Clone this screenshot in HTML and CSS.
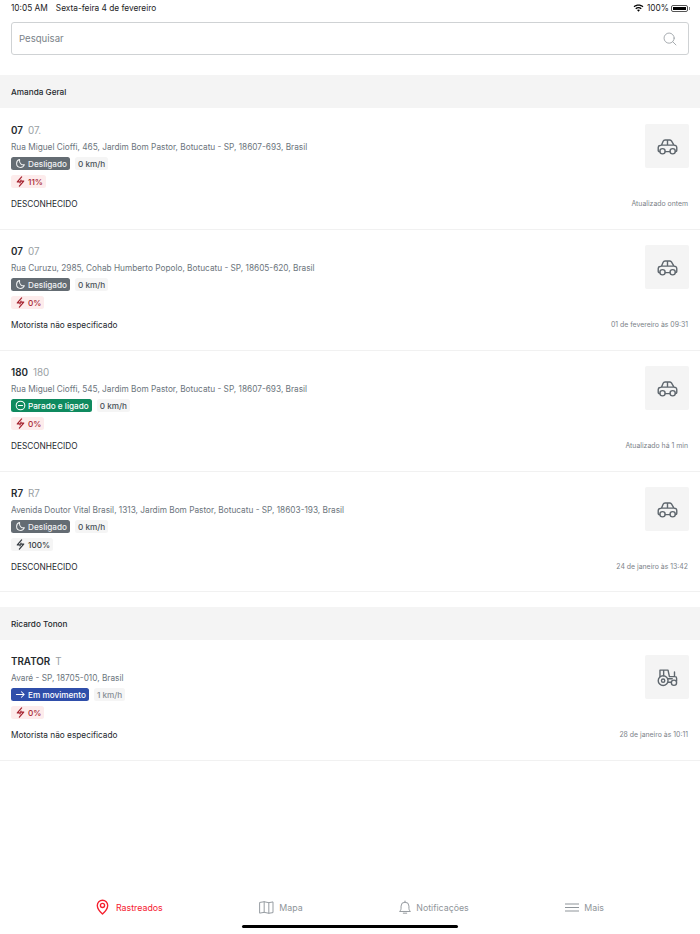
FILE: index.html
```html
<!DOCTYPE html>
<html lang="pt-BR">
<head>
  <meta charset="UTF-8">
  <title>Rastreados</title>
  <link rel="stylesheet" href="styles.css">
</head>
<body>
  <svg class="sprites" width="0" height="0">
    <symbol id="i-car" viewBox="0 0 24 24">
      <path d="M3.2 17.8H2.6C1.9 17.8 1.4 17.3 1.4 16.6V13C1.4 11.8 2.2 11 3.3 10.8L5.2 10.4L7 6C7.4 5 8.2 4.5 9.2 4.5H14.4C15.3 4.5 16 4.9 16.5 5.6L19.4 10.4L21 10.8C22 11.1 22.6 11.9 22.6 13V16.6C22.6 17.3 22.1 17.8 21.4 17.8H21M9.4 17.8H14.8M5.2 10.4H19.4M12 4.5V10.4" />
      <circle cx="6.3" cy="17.4" r="3" />
      <circle cx="17.9" cy="17.4" r="3" />
    </symbol>
    <symbol id="i-tractor" viewBox="0 0 24 24">
      <circle cx="7" cy="15.6" r="5.6" />
      <circle cx="7" cy="15.6" r="1.9" />
      <circle cx="19.4" cy="18" r="3" />
      <path d="M3.4 10.8V3.6H12.6L14.2 11H20.6C21.6 11 22.4 11.8 22.4 12.8V16M12.6 17.4H16.4M12.4 13.4H17.4M20 11V5.6M7.6 3.6V10" />
    </symbol>
    <symbol id="i-moon" viewBox="0 0 24 24">
      <path d="M10 3.5C6 4.5 3.5 8 3.5 12C3.5 17 7.5 20.5 12.2 20.5C16 20.5 19.3 18.2 20.5 14.5C15 16 8.5 11.5 10 3.5Z" />
    </symbol>
    <symbol id="i-minus" viewBox="0 0 24 24">
      <circle cx="12" cy="12" r="9.5" />
      <path d="M7.5 12H16.5" />
    </symbol>
    <symbol id="i-arrow" viewBox="0 0 24 24">
      <path d="M3 12H20M14 6L20 12L14 18" />
    </symbol>
    <symbol id="i-bolt" viewBox="0 0 24 24">
      <path d="M14.5 2L5 13H11.5L11 15M9.5 22L19 11H12.5L13 9" />
    </symbol>
  </svg>

  <div class="page">
    <div class="status-bar">
      <div class="status-left">
        <span>10:05 AM</span>
        <span>Sexta-feira 4 de fevereiro</span>
      </div>
      <div class="status-right">
        <svg class="wifi" viewBox="0 0 16 12">
          <path d="M8 11.5L5.8 9.1C7 8 9 8 10.2 9.1ZM4.6 7.8L3.2 6.3C5.8 3.9 10.2 3.9 12.8 6.3L11.4 7.8C9.5 6.1 6.5 6.1 4.6 7.8ZM2 5L.6 3.5C4.7-.3 11.3-.3 15.4 3.5L14 5C10.6 1.9 5.4 1.9 2 5Z" />
        </svg>
        <span>100%</span>
        <div class="battery"><div class="battery-fill"></div></div>
      </div>
    </div>

    <div class="search">
      <span>Pesquisar</span>
      <svg class="search-icon" viewBox="0 0 16 16">
        <circle cx="7" cy="7" r="5.8" />
        <path d="M11.2 11.2L14.8 14.8" />
      </svg>
    </div>

    <div class="group-title first">Amanda Geral</div>

    <div class="card">
      <div class="card-top">
        <div class="card-info">
          <div class="name"><b>07</b><span>07.</span></div>
          <div class="address">Rua Miguel Cioffi, 465, Jardim Bom Pastor, Botucatu - SP, 18607-693, Brasil</div>
          <div class="chips">
            <div class="chip off"><svg class="chip-icon"><use href="#i-moon" /></svg>Desligado</div>
            <div class="chip speed">0 km/h</div>
          </div>
          <div class="chip low"><svg class="bolt"><use href="#i-bolt" /></svg>11%</div>
        </div>
        <div class="vehicle"><svg><use href="#i-car" /></svg></div>
      </div>
      <div class="card-bottom">
        <span class="driver">DESCONHECIDO</span>
        <span class="updated">Atualizado ontem</span>
      </div>
    </div>

    <div class="card">
      <div class="card-top">
        <div class="card-info">
          <div class="name"><b>07</b><span>07</span></div>
          <div class="address">Rua Curuzu, 2985, Cohab Humberto Popolo, Botucatu - SP, 18605-620, Brasil</div>
          <div class="chips">
            <div class="chip off"><svg class="chip-icon"><use href="#i-moon" /></svg>Desligado</div>
            <div class="chip speed">0 km/h</div>
          </div>
          <div class="chip low"><svg class="bolt"><use href="#i-bolt" /></svg>0%</div>
        </div>
        <div class="vehicle"><svg><use href="#i-car" /></svg></div>
      </div>
      <div class="card-bottom">
        <span class="driver">Motorista não especificado</span>
        <span class="updated">01 de fevereiro às 09:31</span>
      </div>
    </div>

    <div class="card">
      <div class="card-top">
        <div class="card-info">
          <div class="name"><b>180</b><span>180</span></div>
          <div class="address">Rua Miguel Cioffi, 545, Jardim Bom Pastor, Botucatu - SP, 18607-693, Brasil</div>
          <div class="chips">
            <div class="chip idle"><svg class="chip-icon"><use href="#i-minus" /></svg>Parado e ligado</div>
            <div class="chip speed">0 km/h</div>
          </div>
          <div class="chip low"><svg class="bolt"><use href="#i-bolt" /></svg>0%</div>
        </div>
        <div class="vehicle"><svg><use href="#i-car" /></svg></div>
      </div>
      <div class="card-bottom">
        <span class="driver">DESCONHECIDO</span>
        <span class="updated">Atualizado há 1 min</span>
      </div>
    </div>

    <div class="card group-end">
      <div class="card-top">
        <div class="card-info">
          <div class="name"><b>R7</b><span>R7</span></div>
          <div class="address">Avenida Doutor Vital Brasil, 1313, Jardim Bom Pastor, Botucatu - SP, 18603-193, Brasil</div>
          <div class="chips">
            <div class="chip off"><svg class="chip-icon"><use href="#i-moon" /></svg>Desligado</div>
            <div class="chip speed">0 km/h</div>
          </div>
          <div class="chip full"><svg class="bolt"><use href="#i-bolt" /></svg>100%</div>
        </div>
        <div class="vehicle"><svg><use href="#i-car" /></svg></div>
      </div>
      <div class="card-bottom">
        <span class="driver">DESCONHECIDO</span>
        <span class="updated">24 de janeiro às 13:42</span>
      </div>
    </div>

    <div class="group-title">Ricardo Tonon</div>

    <div class="card">
      <div class="card-top">
        <div class="card-info">
          <div class="name"><b>TRATOR</b><span>T</span></div>
          <div class="address">Avaré - SP, 18705-010, Brasil</div>
          <div class="chips">
            <div class="chip moving"><svg class="chip-icon"><use href="#i-arrow" /></svg>Em movimento</div>
            <div class="chip speed moving-speed">1 km/h</div>
          </div>
          <div class="chip low"><svg class="bolt"><use href="#i-bolt" /></svg>0%</div>
        </div>
        <div class="vehicle"><svg><use href="#i-tractor" /></svg></div>
      </div>
      <div class="card-bottom">
        <span class="driver">Motorista não especificado</span>
        <span class="updated">28 de janeiro às 10:11</span>
      </div>
    </div>

    <nav class="tabs">
      <div class="tab active">
        <svg class="pin" viewBox="0 0 16 20">
          <path d="M8 18.8C4.5 15.6 1.5 12 1.5 8A6.5 6.5 0 0 1 14.5 8C14.5 12 11.5 15.6 8 18.8Z" />
          <circle cx="8" cy="8" r="2.6" />
        </svg>
        <span>Rastreados</span>
      </div>
      <div class="tab">
        <svg class="map" viewBox="0 0 16 14">
          <path d="M1 1.5L5.5 .8L10.5 1.8L15 1V12.5L10.5 13.2L5.5 12.2L1 13ZM5.5 .8V12.2M10.5 1.8V13.2" />
        </svg>
        <span>Mapa</span>
      </div>
      <div class="tab">
        <svg class="bell" viewBox="0 0 14 16">
          <path d="M1 12.3C1.9 11.3 2.4 10.4 2.4 9V6.4A4.6 4.6 0 0 1 11.6 6.4V9C11.6 10.4 12.1 11.3 13 12.3ZM5 14.6H9M7 .5V1.8" />
        </svg>
        <span>Notificações</span>
      </div>
      <div class="tab">
        <svg class="menu" viewBox="0 0 14 9">
          <path d="M0 1H14M0 4.5H14M0 8H14" />
        </svg>
        <span>Mais</span>
      </div>
    </nav>
    <div class="home-bar"></div>
  </div>
</body>
</html>
```

FILE: styles.css
```css
* {
  box-sizing: border-box;
}

body {
  margin: 0;
  background: white;
  color: #24292e;
  font-family: Inter, "Noto Sans", sans-serif;
  font-size: 9px;
}

.sprites {
  position: absolute;
}

svg {
  fill: none;
  stroke: currentColor;
  stroke-linecap: round;
  stroke-linejoin: round;
}

.page {
  display: flex;
  flex-direction: column;
  height: 934px;
  overflow: hidden;
}

.status-bar {
  display: flex;
  justify-content: space-between;
  align-items: center;
  height: 16px;
  padding: 0 11px;
  font-size: 8.3px;
  color: #1c1c1e;
}

.status-left {
  display: flex;
  gap: 8px;
}

.status-right {
  display: flex;
  align-items: center;
  gap: 2px;
}

.wifi {
  width: 11px;
  height: 8px;
  margin-right: 1px;
  fill: black;
  stroke: none;
}

.battery {
  position: relative;
  width: 17px;
  height: 7px;
  margin-right: 1px;
  padding: 1px;
  border: 1px solid #555;
  border-radius: 2px;
}

.battery::after {
  content: "";
  position: absolute;
  top: 1px;
  right: -3px;
  width: 1px;
  height: 3px;
  background: #888;
}

.battery-fill {
  height: 100%;
  background: black;
}

.search {
  display: flex;
  justify-content: space-between;
  align-items: center;
  height: 33px;
  margin: 6px 11px 0 11px;
  padding: 0 11px 0 7px;
  border: 1px solid #cfd2d4;
  border-radius: 3px;
  font-size: 9.6px;
  color: #7a8288;
}

.search-icon {
  width: 14px;
  height: 14px;
  color: #9aa0a5;
  stroke-width: 1;
}

.group-title {
  display: flex;
  align-items: center;
  flex-shrink: 0;
  height: 33px;
  margin-top: 15px;
  padding: 0 11px;
  background: #f4f4f4;
  font-size: 8.2px;
  font-weight: 500;
}

.group-title.first {
  margin-top: 20px;
  margin-bottom: 1px;
}

.card {
  flex-shrink: 0;
  height: 121px;
  padding: 15px 11px 0;
  border-bottom: 1px solid #f1f1f1;
}

.card.group-end {
  height: 120px;
}

.card-top {
  display: flex;
  justify-content: space-between;
  height: 72.5px;
}

.card-info {
  display: flex;
  flex-direction: column;
  align-items: flex-start;
}

.name {
  display: flex;
  gap: 5px;
  height: 13px;
  margin-bottom: 3px;
  font-size: 9.8px;
  line-height: 13px;
}

.name b {
  font-weight: 600;
}

.name span {
  color: #9a9fa4;
}

.address {
  height: 14px;
  margin-bottom: 3px;
  font-size: 8.28px;
  line-height: 14px;
  color: #6c757d;
}

.chips {
  display: flex;
  gap: 5px;
  margin-bottom: 5px;
}

.chip {
  display: flex;
  align-items: center;
  gap: 2px;
  height: 13px;
  padding: 0 3px;
  border-radius: 2.5px;
  font-size: 8.2px;
  font-weight: 500;
}

.chip-icon {
  width: 11px;
  height: 11px;
  margin-left: 1px;
  stroke-width: 2.2;
}

.bolt {
  width: 11px;
  height: 11px;
  margin-left: 1px;
  stroke-width: 2.6;
}

.off {
  background: #646c73;
  color: #f1f2f3;
}

.idle {
  background: #0f8a5f;
  color: white;
}

.moving {
  background: #2f4eaa;
  color: white;
}

.speed {
  background: #f5f5f5;
  color: #495057;
}

.moving-speed {
  color: #868e96;
}

.low {
  background: #fdecec;
  color: #a5222f;
}

.full {
  background: #f5f5f5;
  color: #343a40;
}

.vehicle {
  display: flex;
  justify-content: center;
  align-items: center;
  flex-shrink: 0;
  width: 44px;
  height: 44px;
  border-radius: 2px;
  background: #f4f4f4;
  color: #5f676e;
}

.vehicle svg {
  width: 21px;
  height: 21px;
  stroke-width: 1.6;
}

.card-bottom {
  display: flex;
  justify-content: space-between;
  align-items: center;
  height: 14px;
}

.driver {
  font-size: 8.27px;
}

.updated {
  margin-right: 1px;
  font-size: 6.9px;
  color: #7b8288;
}

.tabs {
  display: flex;
  justify-content: space-between;
  align-items: center;
  height: 26px;
  margin-top: auto;
  padding-left: 96px;
  padding-right: 96px;
  color: #8f959a;
  font-size: 8.8px;
}

.tab {
  display: flex;
  align-items: center;
  gap: 5px;
}

.tab.active {
  color: #f5202f;
  gap: 7px;
}

.pin {
  width: 13px;
  height: 16px;
  stroke-width: 1.7;
}

.map {
  width: 15px;
  height: 13px;
  stroke-width: 1;
}

.bell {
  width: 12px;
  height: 15px;
  stroke-width: 1.1;
}

.menu {
  width: 14px;
  height: 9px;
  stroke-width: 1;
}

.home-bar {
  flex-shrink: 0;
  width: 216px;
  height: 3px;
  margin: 5px auto 6px;
  border-radius: 2px;
  background: black;
}
```
